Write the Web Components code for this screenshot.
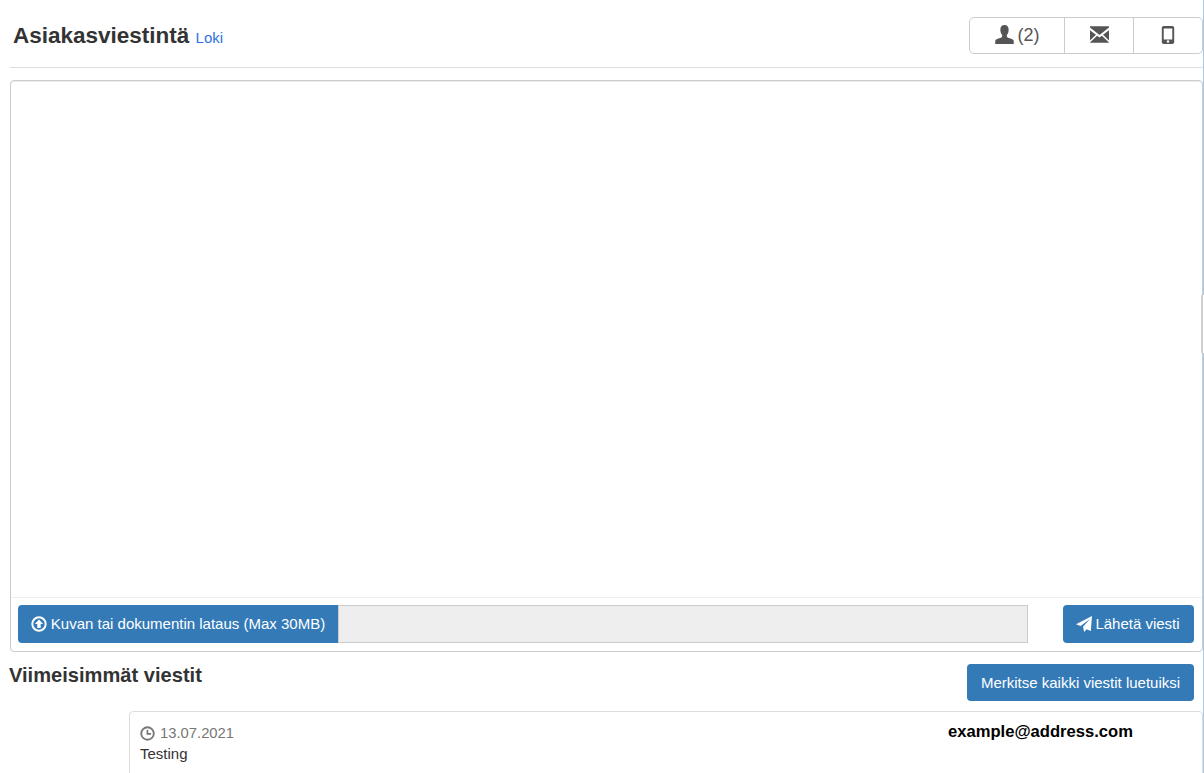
<!DOCTYPE html>
<html lang="fi">
<head>
<meta charset="utf-8">
<title>Asiakasviestintä</title>
<style>
  html, body { margin: 0; height: 773px; overflow: hidden; background: #fff; }
  body { font: 15px/20px "Liberation Sans", Arial, sans-serif; color: #333; }
</style>
</head>
<body>
<message-page></message-page>

<script>
// glyph paths, all on a 16x16 box
const ICONS = {
  user: '<path d="M8 0c2.300 0 3.500 1.700 3.500 3.900 0 1.700-.6 3.400-1.500 4.400v1.300c0 .6 1 1 2.500 1.600 1.600.6 3 1.200 3.300 2.100V16H.2v-2.700c.3-.9 1.700-1.500 3.300-2.100C5 10.600 6 10.200 6 9.600V8.300C5.100 7.300 4.500 5.600 4.500 3.900 4.500 1.700 5.700 0 8 0z"/>',
  mail: '<path d="M0 1h16v1.200L8 8.400 0 2.200z"/><path d="M0 4.400l5 3.900-5 4.700z"/><path d="M16 4.400l-5 3.900 5 4.700z"/><path d="M6 9.100l2 1.500 2-1.500 6 5.600V15H0v-.3z"/>',
  phone: '<path fill-rule="evenodd" d="M4.200 0h7.600c1 0 1.700.7 1.700 1.700v12.600c0 1-.7 1.700-1.700 1.700H4.200c-1 0-1.700-.7-1.700-1.700V1.700C2.500.7 3.200 0 4.200 0zM4.200 2.200v9.900h7.600V2.200zM8 12.700a1.100 1.100 0 1 0 0 2.200 1.100 1.100 0 0 0 0-2.200z"/>',
  upload: '<path fill-rule="evenodd" d="M8 .3a7.700 7.700 0 1 1 0 15.400A7.700 7.700 0 0 1 8 .3zm0 2a5.700 5.700 0 1 0 0 11.400A5.700 5.700 0 0 0 8 2.300zM8 3.400l4.200 4.600H9.700v4H6.300V8H3.800z"/>',
  send: '<path d="M16 0L14.800 15 10.600 13.200 8.200 16 7 10.800 14 3 4.600 10 0 8.200z"/>',
  clock: '<path fill-rule="evenodd" d="M8 .3a7.700 7.700 0 1 1 0 15.400A7.700 7.700 0 0 1 8 .3zm0 2a5.700 5.700 0 1 0 0 11.400A5.700 5.700 0 0 0 8 2.300zM7 4h1.800v3.400h3v1.800H7z"/>'
};

class UiIcon extends HTMLElement {
  constructor() {
    super();
    this.shadow = this.attachShadow({ mode: 'open' });
  }

  connectedCallback() {
    const size = this.getAttribute('size') || 14;
    this.shadow.innerHTML = `
      <style>
        :host { display: inline-flex; flex: none; }
        svg { display: block; fill: currentColor; }
      </style>
      <svg width="${size}" height="${size}" viewBox="0 0 16 16">${ICONS[this.getAttribute('name')]}</svg>
    `;
  }
}

class UiButton extends HTMLElement {
  constructor() {
    super();
    this.attachShadow({ mode: 'open' }).innerHTML = `
      <style>
        :host {
          display: inline-flex;
          align-items: center;
          justify-content: center;
          gap: 3px;
          box-sizing: border-box;
          height: 38px;
          padding: 0 13px;
          background: #337ab7;
          color: #fff;
          border-radius: 4px;
          font-size: 15px;
          white-space: nowrap;
        }
      </style>
      <slot></slot>
    `;
  }
}

class ChannelTabs extends HTMLElement {
  constructor() {
    super();
    this.attachShadow({ mode: 'open' }).innerHTML = `
      <style>
        :host {
          display: flex;
          box-sizing: border-box;
          width: 234px;
          height: 37px;
          border: 1px solid #ccc;
          border-radius: 5px;
          color: #555;
          font-size: 18px;
        }
        div {
          display: flex;
          align-items: center;
          justify-content: center;
          gap: 4px;
          box-sizing: border-box;
          width: 69px;
          border-left: 1px solid #ccc;
          padding-bottom: 2px;
        }
        .count { width: 94px; border-left: 0; }
      </style>
      <div class="count"><ui-icon name="user" size="19"></ui-icon>(2)</div>
      <div><ui-icon name="mail" size="19"></ui-icon></div>
      <div><ui-icon name="phone" size="18"></ui-icon></div>
    `;
  }
}

class PageHeader extends HTMLElement {
  constructor() {
    super();
    this.attachShadow({ mode: 'open' }).innerHTML = `
      <style>
        :host {
          display: flex;
          justify-content: space-between;
          align-items: flex-start;
          box-sizing: border-box;
          height: 68px;
          margin-left: 10px;
          padding: 17px 1px 0 3px;
          border-bottom: 1px solid #ddd;
        }
        h1 { margin: 6px 0 0; font-size: 22.5px; line-height: 26px; font-weight: bold; color: #333; }
        a { font-size: 15px; font-weight: normal; color: #2f73e0; }
      </style>
      <h1>Asiakasviestintä <a>Loki</a></h1>
      <channel-tabs></channel-tabs>
    `;
  }
}

class ComposePanel extends HTMLElement {
  constructor() {
    super();
    this.attachShadow({ mode: 'open' }).innerHTML = `
      <style>
        :host {
          display: flex;
          flex-direction: column;
          box-sizing: border-box;
          height: 572px;
          margin: 12px 1px 0 10px;
          border: 1px solid #ccc;
          border-radius: 4px;
          box-shadow: inset 0 1px 1px rgba(0,0,0,.075);
        }
        .editor { flex: 1; }
        .tools {
          display: flex;
          align-items: flex-start;
          height: 54px;
          padding: 7px 8px 0 7px;
          border-top: 1px solid #eee;
          box-sizing: border-box;
        }
        .upload { width: 320px; gap: 4px; border-radius: 4px 0 0 4px; }
        .progress {
          box-sizing: border-box;
          width: 690px;
          height: 38px;
          margin-right: 35px;
          background: #eee;
          border: 1px solid #ccc;
        }
        .send { width: 131px; padding: 0 14px 0 13px; }
      </style>
      <div class="editor"></div>
      <div class="tools">
        <ui-button class="upload"><ui-icon name="upload" size="16"></ui-icon>Kuvan tai dokumentin lataus (Max 30MB)</ui-button>
        <div class="progress"></div>
        <ui-button class="send"><ui-icon name="send" size="16"></ui-icon>Lähetä viesti</ui-button>
      </div>
    `;
  }
}

class RecentHeader extends HTMLElement {
  constructor() {
    super();
    this.attachShadow({ mode: 'open' }).innerHTML = `
      <style>
        :host {
          display: flex;
          justify-content: space-between;
          align-items: flex-start;
          height: 59px;
          padding: 12px 10px 0 9px;
          box-sizing: border-box;
        }
        h2 { margin: 0; font-size: 20.1px; line-height: 22px; font-weight: bold; color: #333; }
        ui-button { width: 227px; height: 37px; }
      </style>
      <h2>Viimeisimmät viestit</h2>
      <ui-button>Merkitse kaikki viestit luetuiksi</ui-button>
    `;
  }
}

class MessageCard extends HTMLElement {
  constructor() {
    super();
    this.attachShadow({ mode: 'open' }).innerHTML = `
      <style>
        :host {
          display: flex;
          justify-content: space-between;
          box-sizing: border-box;
          height: 120px;
          margin: 0 1px 0 129px;
          padding: 11px 69px 0 10px;
          border: 1px solid #ddd;
          border-radius: 4px;
        }
        .date { display: flex; align-items: center; gap: 5px; color: #777; font-size: 14.8px; }
        .text { font-size: 15px; color: #333; margin-top: 1px; }
        .who { font-size: 16.6px; font-weight: bold; color: #000; line-height: 18px; }
      </style>
      <div>
        <div class="date"><ui-icon name="clock" size="15"></ui-icon><slot name="date"></slot></div>
        <div class="text"><slot></slot></div>
      </div>
      <div class="who"><slot name="who"></slot></div>
    `;
  }
}

// thin strip on the window's right edge, with the collapsed handle over it
class EdgeRail extends HTMLElement {
  constructor() {
    super();
    this.attachShadow({ mode: 'open' }).innerHTML = `
      <style>
        :host {
          position: absolute;
          top: 0;
          right: 0;
          bottom: 0;
          width: 1px;
          background: #a9c8e2;
        }
        div {
          position: absolute;
          top: 295px;
          right: 0;
          width: 3px;
          height: 58px;
          background: #fff;
          border-left: 2px solid #d0d0d0;
          box-sizing: border-box;
        }
      </style>
      <div></div>
    `;
  }
}

class MessagePage extends HTMLElement {
  constructor() {
    super();
    this.attachShadow({ mode: 'open' }).innerHTML = `
      <style>
        :host { display: block; position: relative; height: 773px; overflow: hidden; }
      </style>
      <page-header></page-header>
      <compose-panel></compose-panel>
      <recent-header></recent-header>
      <message-card>
        <span slot="date">13.07.2021</span>
        Testing
        <span slot="who">example@address.com</span>
      </message-card>
      <edge-rail></edge-rail>
    `;
  }
}

customElements.define('ui-icon', UiIcon);
customElements.define('ui-button', UiButton);
customElements.define('channel-tabs', ChannelTabs);
customElements.define('page-header', PageHeader);
customElements.define('compose-panel', ComposePanel);
customElements.define('recent-header', RecentHeader);
customElements.define('message-card', MessageCard);
customElements.define('edge-rail', EdgeRail);
customElements.define('message-page', MessagePage);
</script>
</body>
</html>
